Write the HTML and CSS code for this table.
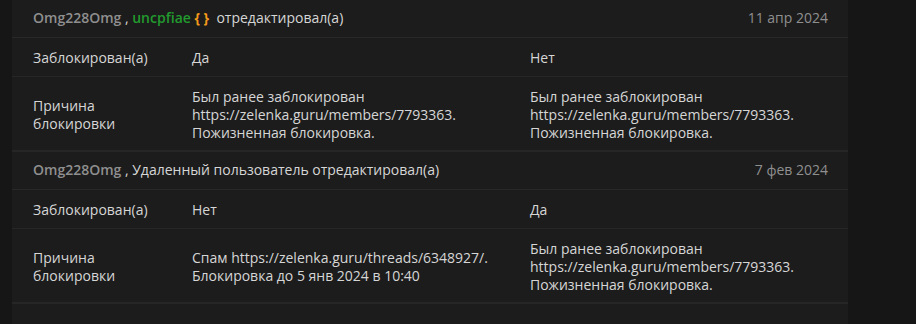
FILE: index.html
```html
<!DOCTYPE html>
<html lang="ru">
<head>
<meta charset="utf-8">
<link rel="stylesheet" href="styles.css">
</head>
<body>
<div class="panel">
  <div class="entry">
    <div class="head">
      <div class="who"><span class="user">Omg228Omg</span> , <span class="user-green">uncpfiae</span> <span class="braces">{ }</span>&nbsp; отредактировал(а)</div>
      <div class="date">11 апр 2024</div>
    </div>
    <div class="row">
      <div class="label">Заблокирован(а)</div>
      <div class="val">Да</div>
      <div class="val">Нет</div>
    </div>
    <div class="row">
      <div class="label">Причина<br>блокировки</div>
      <div class="val">Был ранее заблокирован<br>https://zelenka.guru/members/7793363.<br>Пожизненная блокировка.</div>
      <div class="val">Был ранее заблокирован<br>https://zelenka.guru/members/7793363.<br>Пожизненная блокировка.</div>
    </div>
  </div>
  <div class="entry">
    <div class="head">
      <div class="who"><span class="user">Omg228Omg</span> , Удаленный пользователь отредактировал(а)</div>
      <div class="date">7 фев 2024</div>
    </div>
    <div class="row">
      <div class="label">Заблокирован(а)</div>
      <div class="val">Нет</div>
      <div class="val">Да</div>
    </div>
    <div class="row">
      <div class="label">Причина<br>блокировки</div>
      <div class="val">Спам https://zelenka.guru/threads/6348927/.<br>Блокировка до 5 янв 2024 в 10:40</div>
      <div class="val">Был ранее заблокирован<br>https://zelenka.guru/members/7793363.<br>Пожизненная блокировка.</div>
    </div>
  </div>
  <div class="tail"></div>
</div>
</body>
</html>
```
FILE: styles.css
```css
html, body {
  margin: 0;
  padding: 0;
  background: #161616;
}
body {
  font-family: "Open Sans", "Noto Sans", sans-serif;
  font-size: 14px;
  line-height: 18px;
  color: #d6d6d6;
}
.panel {
  margin-left: 12px;
  width: 836px;
  background: #1c1c1c;
  min-height: 324px;
}
.head {
  display: flex;
  justify-content: space-between;
  align-items: center;
  padding: 9px 20px 10px 21px;
  border-bottom: 1px solid #282828;
}
.user {
  color: #8f8f8f;
  font-weight: 600;
}
.user-green {
  color: #229a2e;
  font-weight: 600;
}
.braces {
  color: #f39a1b;
  font-weight: 700;
}
.date {
  color: #8f8f8f;
}
.row {
  display: grid;
  grid-template-columns: 159px 338px 1fr;
  align-items: center;
  padding: 11px 20px 9px 21px;
  border-bottom: 1px solid #262626;
}
.entry .row:last-child {
  padding-bottom: 8px;
  border-bottom: 2px solid #262626;
}
.tail {
  height: 21px;
}
```
